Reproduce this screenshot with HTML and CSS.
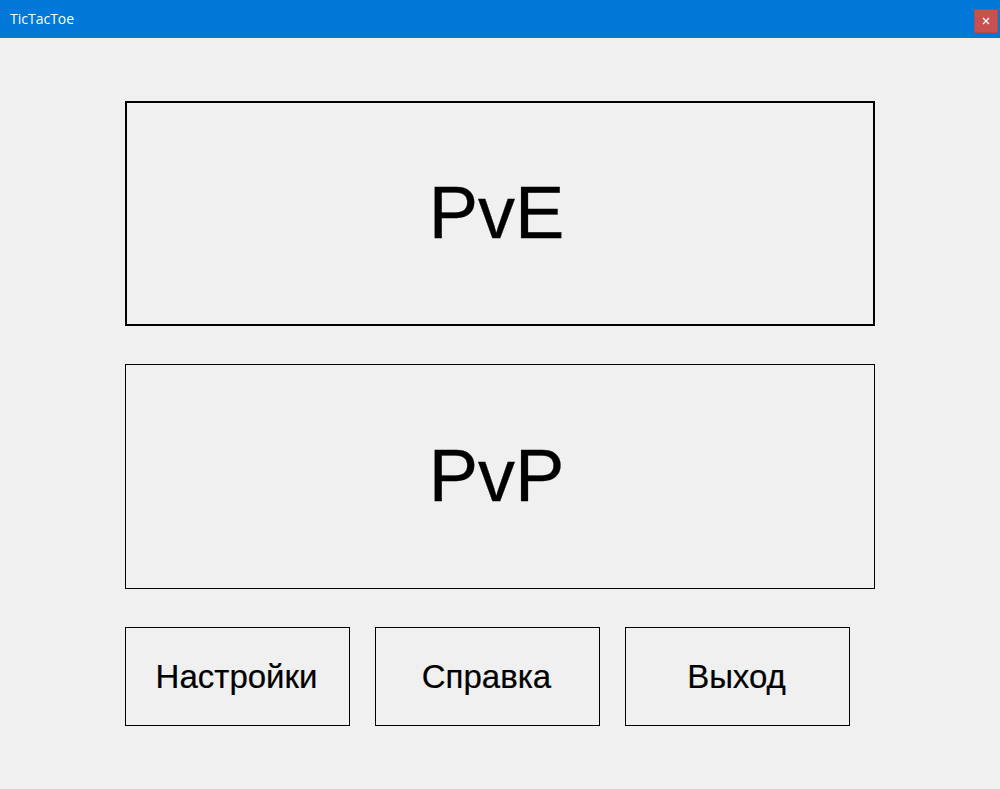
FILE: index.html
```html
<!DOCTYPE html>
<html lang="ru">
<head>
<meta charset="utf-8">
<title>TicTacToe</title>
<link rel="stylesheet" href="styles.css">
</head>
<body>
<div class="window">
  <div class="titlebar">
    <span class="title">TicTacToe</span>
    <button class="close" aria-label="Закрыть">
      <svg width="8" height="8" viewBox="0 0 8 8"><path d="M1 1L7 7M7 1L1 7" stroke="#fff" stroke-width="1.4"/></svg>
    </button>
  </div>
  <main class="content">
    <button class="mode focused">PvE</button>
    <button class="mode">PvP</button>
    <div class="row">
      <button class="small">Настройки</button>
      <button class="small">Справка</button>
      <button class="small">Выход</button>
    </div>
  </main>
</div>
</body>
</html>
```
FILE: styles.css
```css
html, body {
  margin: 0;
  padding: 0;
  background: #f0f0f0;
  font-family: "Liberation Sans", Arial, sans-serif;
}
.window {
  width: 1000px;
  height: 789px;
  display: flex;
  flex-direction: column;
}
.titlebar {
  height: 38px;
  background: #0078d7;
  display: flex;
  align-items: center;
  justify-content: space-between;
  padding: 0 2px 0 10px;
  box-sizing: border-box;
}
.title {
  color: #fff;
  font-family: "Open Sans", "Noto Sans", sans-serif;
  font-size: 14px;
  margin-top: -2px;
}
.close {
  width: 24px;
  height: 24px;
  background: #c75050;
  border: 1px solid #b44a4a;
  margin-top: 4px;
  padding: 0;
  display: flex;
  align-items: center;
  justify-content: center;
}
.content {
  padding: 63px 0 0 125px;
  display: flex;
  flex-direction: column;
  gap: 38px;
}
button {
  font-family: "Liberation Sans", Arial, sans-serif;
  color: #000;
  cursor: pointer;
}
.mode {
  width: 750px;
  height: 225px;
  background: #f0f0f0;
  border: 1px solid #000;
  font-size: 74px;
  padding: 0 7px 2px 0;
  -webkit-text-stroke: 0.3px #000;
}
.mode.focused {
  border: 2px solid #000;
}
.row {
  display: flex;
  gap: 25px;
}
.small {
  width: 225px;
  height: 99px;
  background: #f0f0f0;
  border: 1px solid #000;
  font-size: 33px;
  padding: 0 2px 0 0;
  -webkit-text-stroke: 0.2px #000;
}
```
